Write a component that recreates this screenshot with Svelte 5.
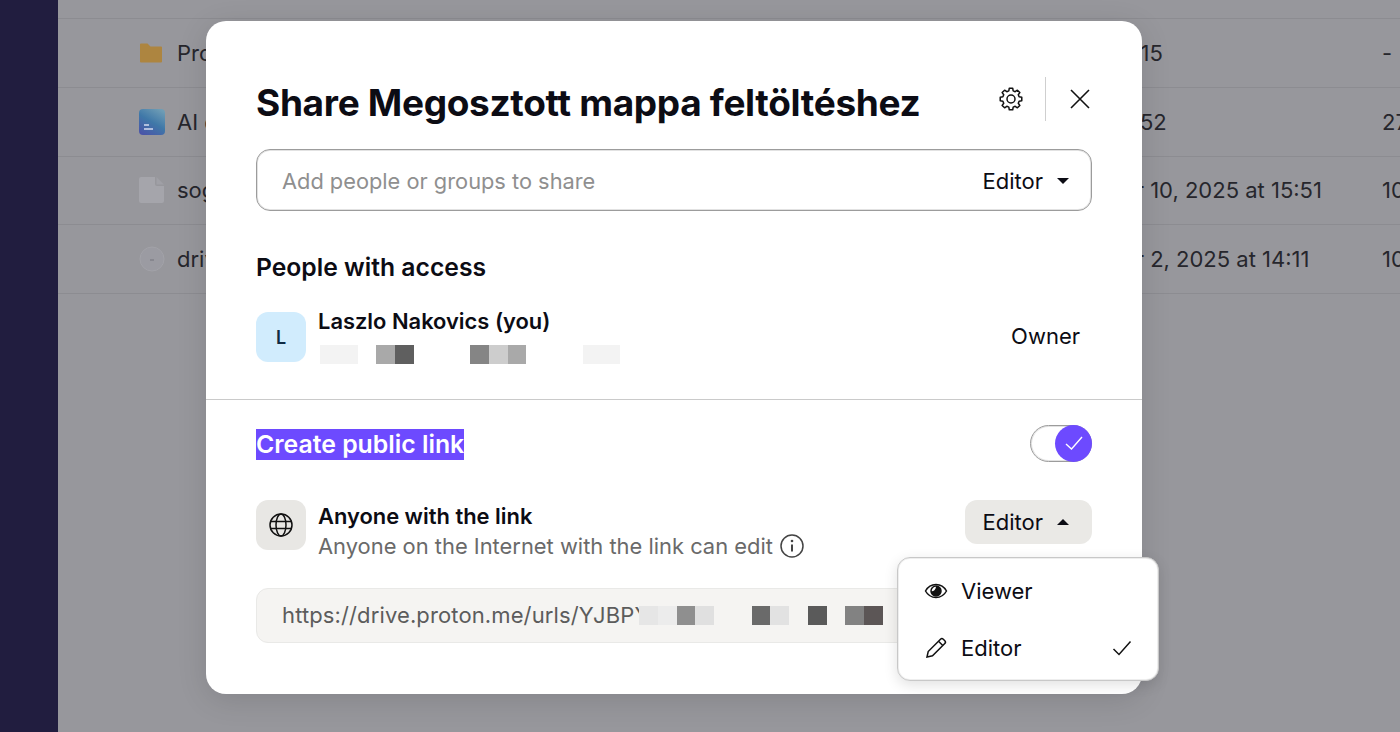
<script>
  const files = [
    { name: "Projects", date: "Today, 14:15", size: "-", kind: "folder" },
    { name: "AI documents", date: "Today, 13:52", size: "27 MB", kind: "doc" },
    { name: "sogo-backup.zip", date: "December 10, 2025 at 15:51", size: "10 MB", kind: "file" },
    { name: "drive-installer", date: "December 2, 2025 at 14:11", size: "10 MB", kind: "disc" }
  ];

  const S = "#f3f3f3";
  const emailCells = [S, S, null, "#a9a9a9", "#5f5f5f", null, null, null, "#858585", "#cdcdcd", "#a9a9a9", null, null, null, S, S];
  const linkCells = ["#e6e6e6", "#ececec", "#8f8f8f", "#e0e0e0", null, null, "#6a6a6a", "#e2e2e2", null, "#5a5a5a", null, "#828282", "#5c5656"];

  // eight teeth, one pointing straight up
  const pt = (deg, r) => {
    const a = ((deg - 90) * Math.PI) / 180;
    return `${(12 + r * Math.cos(a)).toFixed(2)} ${(12 + r * Math.sin(a)).toFixed(2)}`;
  };
  const gearPath =
    [0, 45, 90, 135, 180, 225, 270, 315]
      .map((t, i) => `${i ? "L" : "M"}${pt(t - 15, 8.4)} L${pt(t - 9, 10.9)} L${pt(t + 9, 10.9)} L${pt(t + 15, 8.4)}`)
      .join(" ") + " Z";
</script>

<div class="page">
  <aside class="sidebar"></aside>
  <main class="list">
    {#each files as file}
      <div class="row">
        <span class="file-icon">
          {#if file.kind === "folder"}
            <svg viewBox="0 0 24 24" width="24" height="24"><path d="M1 3.500a1 1 0 0 1 1-1h6.500l3 3H22a1 1 0 0 1 1 1v14a1 1 0 0 1-1 1H2a1 1 0 0 1-1-1z" fill="#ad8540"/></svg>
          {:else if file.kind === "doc"}
            <svg viewBox="0 0 26 26" width="26" height="26">
              <defs>
                <linearGradient id="docfill" x1="0.8" y1="0" x2="0.2" y2="1">
                  <stop offset="0" stop-color="#6f9db5"/>
                  <stop offset="0.5" stop-color="#3f78a8"/>
                  <stop offset="1" stop-color="#4a55a8"/>
                </linearGradient>
              </defs>
              <rect width="26" height="26" rx="4" fill="url(#docfill)"/>
              <path d="M5 16h5M5 20h9" stroke="#d5dcef" stroke-width="1.600"/>
            </svg>
          {:else if file.kind === "file"}
            <svg viewBox="0 0 25 26" width="25" height="26"><path d="M2 0h14v7a2 2 0 0 0 2 2h7v15a2 2 0 0 1-2 2H2a2 2 0 0 1-2-2V2a2 2 0 0 1 2-2z" fill="#a5a5ab"/><path d="M17.500 0 25 7.500h-7.500z" fill="#a0a0a6"/></svg>
          {:else}
            <svg viewBox="0 0 26 26" width="26" height="26"><circle cx="13" cy="13" r="12" fill="#9b9ba2" stroke="#a2a2a8"/><path d="M11 14h4" stroke="#808088" stroke-width="1.500"/></svg>
          {/if}
        </span>
        <span class="file-name">{file.name}</span>
        <span class="file-date">{file.date}</span>
        <span class="file-size">{file.size}</span>
      </div>
    {/each}
  </main>

  <div class="overlay">
    <section class="modal">
      <header class="modal-head">
        <h1>Share Megosztott mappa feltöltéshez</h1>
        <div class="head-actions">
          <svg class="gear" viewBox="0 0 24 24" width="24" height="24" fill="none" stroke="#111" stroke-width="1.500" stroke-linejoin="round">
            <path d={gearPath}/>
            <circle cx="12" cy="12" r="4"/>
          </svg>
          <span class="head-sep"></span>
          <svg class="close" viewBox="0 0 20 20" width="20" height="20" fill="none" stroke="#111" stroke-width="1.600">
            <path d="M1 1l18 18M19 1 1 19"/>
          </svg>
        </div>
      </header>

      <div class="invite">
        <span class="placeholder">Add people or groups to share</span>
        <span class="role">Editor <span class="caret-down"></span></span>
      </div>

      <h2 class="people-title">People with access</h2>
      <div class="person">
        <span class="avatar">L</span>
        <div class="person-text">
          <div class="strong">Laszlo Nakovics (you)</div>
          <div class="cells">
            {#each emailCells as c}
              <i style:background={c}></i>
            {/each}
          </div>
        </div>
        <span class="owner">Owner</span>
      </div>

      <hr class="divider" />

      <div class="public-head">
        <h2 class="public-title"><span class="selected">Create public link</span></h2>
        <span class="toggle">
          <span class="knob">
            <svg viewBox="0 0 20 20" width="20" height="20" fill="none" stroke="#fff" stroke-width="1.400"><path d="M2 11l5.500 5L18 4"/></svg>
          </span>
        </span>
      </div>

      <div class="access">
        <span class="globe-box">
          <svg viewBox="0 0 24 24" width="24" height="24" fill="none" stroke="#111" stroke-width="1.500">
            <circle cx="12" cy="12" r="11"/>
            <ellipse cx="12" cy="12" rx="5" ry="11"/>
            <path d="M1 8.500h22M1 15.500h22"/>
          </svg>
        </span>
        <div class="access-text">
          <div class="strong">Anyone with the link</div>
          <div class="muted">
            Anyone on the Internet with the link can edit
            <svg class="info" viewBox="0 0 24 24" width="24" height="24" fill="none" stroke="#444" stroke-width="1.500">
              <circle cx="12" cy="12" r="11"/>
              <path d="M12 10.500v7" stroke-width="2"/>
              <circle cx="12" cy="7" r="1.300" fill="#444" stroke="none"/>
            </svg>
          </div>
        </div>
        <span class="role-btn">Editor <span class="caret-up"></span></span>
      </div>

      <div class="link-box">
        <span class="link-text">https://drive.proton.me/urls/YJBPYZQ8</span>
        <div class="cells">
          {#each linkCells as c}
            <i style:background={c}></i>
          {/each}
        </div>
      </div>

      <div class="menu">
        <div class="menu-item">
          <svg viewBox="0 0 24 24" width="24" height="24" fill="none" stroke="#111" stroke-width="1.500">
            <path d="M1.500 12C4 7.500 7.500 5.500 12 5.500s8 2 10.500 6.500C20 16.500 16.500 18.500 12 18.500S4 16.500 1.500 12z"/>
            <circle cx="12" cy="12" r="5"/>
            <path d="M12 7a5 5 0 1 1-5 5c3 1 5-2 5-5z" fill="#111" stroke="none"/>
          </svg>
          <span>Viewer</span>
        </div>
        <div class="menu-item">
          <svg viewBox="0 0 24 24" width="24" height="24" fill="none" stroke="#111" stroke-width="1.500">
            <path d="M3 21l1.200-5.500L16.500 3.200a2 2 0 0 1 2.800 0l1.500 1.500a2 2 0 0 1 0 2.800L8.500 19.800z"/>
            <path d="M14.500 5.200l4.300 4.300"/>
          </svg>
          <span>Editor</span>
          <svg class="tick" viewBox="0 0 20 20" width="20" height="20" fill="none" stroke="#111" stroke-width="1.500"><path d="M1.500 11l5.500 5.500L18.500 3.500"/></svg>
        </div>
      </div>
    </section>
  </div>
</div>

<style>
  :global(body) {
    margin: 0;
    overflow: hidden;
    font-family: Inter, "Liberation Sans", sans-serif;
  }

  .page {
    position: relative;
    display: flex;
    width: 1400px;
    height: 732px;
    overflow: hidden;
    background: #97979c;
  }

  .sidebar {
    width: 58px;
    flex: none;
    background: #211d3f;
  }

  .list {
    flex: 1;
    padding-top: 18px;
    min-width: 0;
  }

  .row {
    display: grid;
    grid-template-columns: 38px 859px 346px 100px;
    align-items: center;
    height: 68.800px;
    padding-left: 81px;
    box-sizing: border-box;
    border-top: 1px solid #8c8c91;
    font-size: 22px;
    color: #26262c;
    white-space: nowrap;
  }

  .row:last-child {
    border-bottom: 1px solid #8c8c91;
    height: 69.800px;
  }

  .file-icon {
    display: flex;
  }

  .overlay {
    position: absolute;
    inset: 0;
    padding: 21px 0 0 206px;
  }

  .modal {
    position: relative;
    width: 936px;
    height: 673px;
    box-sizing: border-box;
    padding: 57px 50px 0;
    background: #fff;
    border-radius: 20px;
    box-shadow: 0 6px 30px rgba(0, 0, 0, 0.12);
    color: #0c0c14;
  }

  .modal-head {
    display: flex;
    justify-content: space-between;
    align-items: center;
    height: 48px;
  }

  h1 {
    margin: 0;
    font-size: 37px;
    font-weight: 700;
    letter-spacing: -0.32px;
  }

  .head-actions {
    display: flex;
    align-items: center;
    margin-top: -6px;
  }

  .gear {
    margin-right: 22px;
  }

  .head-sep {
    width: 1px;
    height: 44px;
    background: #cfcfcf;
    margin-right: 24px;
  }

  .close {
    margin-right: 2px;
  }

  .invite {
    display: flex;
    justify-content: space-between;
    align-items: center;
    height: 62px;
    margin-top: 23px;
    padding: 2px 22px 0 25px;
    box-sizing: border-box;
    border: 1px solid #9c9c9c;
    box-shadow: inset 0 0 0 1px rgba(160, 160, 160, 0.3);
    border-radius: 14px;
    font-size: 22px;
  }

  .placeholder {
    color: #8f8f8f;
    font-size: 21.800px;
  }

  .role,
  .role-btn {
    display: flex;
    align-items: center;
    gap: 14px;
    font-size: 22px;
  }

  .caret-down,
  .caret-up {
    width: 0;
    height: 0;
    border-left: 6.500px solid transparent;
    border-right: 6.500px solid transparent;
  }

  .caret-down {
    border-top: 6.500px solid #0c0c14;
  }

  .caret-up {
    border-bottom: 6.500px solid #0c0c14;
  }

  .people-title {
    margin: 39px 0 0;
    font-size: 24.700px;
    font-weight: 600;
    line-height: 34px;
  }

  .person {
    display: flex;
    align-items: center;
    gap: 12px;
    margin-top: 27px;
  }

  .avatar,
  .globe-box {
    display: flex;
    align-items: center;
    justify-content: center;
    flex: none;
    width: 50px;
    height: 50px;
    border-radius: 12px;
  }

  .avatar {
    background: #d1ecfd;
    font-size: 18px;
    font-weight: 600;
    color: #0f2a44;
  }

  .globe-box {
    background: #e8e7e4;
  }

  .person-text {
    flex: 1;
    margin-top: -3px;
  }

  .strong {
    font-size: 21.900px;
    font-weight: 600;
    line-height: 26px;
  }

  .cells {
    display: flex;
  }

  .cells i {
    display: block;
    width: 18.750px;
    height: 18.750px;
  }

  .person-text .cells {
    margin: 11px 0 0 2px;
  }

  .owner {
    font-size: 22px;
    margin: -2px 12px 0 0;
  }

  .divider {
    height: 1px;
    margin: 35px -50px 0;
    border: none;
    background: #cacaca;
  }

  .public-head {
    display: flex;
    justify-content: space-between;
    align-items: center;
    margin-top: 25px;
  }

  .public-title {
    margin: 2px 0 0;
    font-size: 24.800px;
    font-weight: 600;
    line-height: 31px;
  }

  .selected {
    display: inline-block;
    background: #6d4aff;
    color: #fff;
  }

  .toggle {
    position: relative;
    display: block;
    width: 62px;
    height: 37px;
    box-sizing: border-box;
    border: 1px solid #9c9c9c;
    box-shadow: inset 0 0 0 1px rgba(160, 160, 160, 0.3);
    border-radius: 19px;
  }

  .knob {
    position: absolute;
    top: -1px;
    right: -1px;
    display: flex;
    align-items: center;
    justify-content: center;
    width: 37px;
    height: 37px;
    border-radius: 50%;
    background: #6d4aff;
  }

  .access {
    display: flex;
    align-items: flex-start;
    gap: 12px;
    margin-top: 38px;
  }

  .access-text {
    flex: 1;
  }

  .access-text .strong {
    margin-top: 3px;
  }

  .muted {
    display: flex;
    align-items: center;
    gap: 7px;
    margin-top: 2px;
    font-size: 21.900px;
    line-height: 31px;
    color: #6a6a6a;
  }

  .role-btn {
    height: 44px;
    padding: 0 23px 0 18px;
    box-sizing: border-box;
    background: #eae9e6;
    border-radius: 12px;
  }

  .link-box {
    display: flex;
    align-items: center;
    width: 800px;
    height: 55px;
    margin-top: 26px;
    padding-left: 25px;
    box-sizing: border-box;
    background: #f5f4f2;
    border: 1px solid #e9e9e7;
    border-radius: 12px;
    font-size: 22px;
    letter-spacing: 0.12px;
    color: #5c5c5c;
  }

  .link-text {
    flex: none;
    width: 357px;
    overflow: hidden;
    white-space: nowrap;
  }

  .menu {
    position: absolute;
    left: 691px;
    top: 536px;
    display: flex;
    flex-direction: column;
    width: 262px;
    height: 124px;
    box-sizing: border-box;
    padding: 5px 0 4px;
    background: #fff;
    border: 1px solid #c8c8c8;
    box-shadow: inset 0 0 0 1px rgba(200, 200, 200, 0.3), 0 4px 14px rgba(0, 0, 0, 0.12);
    border-radius: 13px;
    font-size: 22px;
  }

  .menu-item {
    display: flex;
    align-items: center;
    flex: 1;
    gap: 13px;
    padding: 0 26px;
  }

  .tick {
    margin-left: auto;
  }
</style>
